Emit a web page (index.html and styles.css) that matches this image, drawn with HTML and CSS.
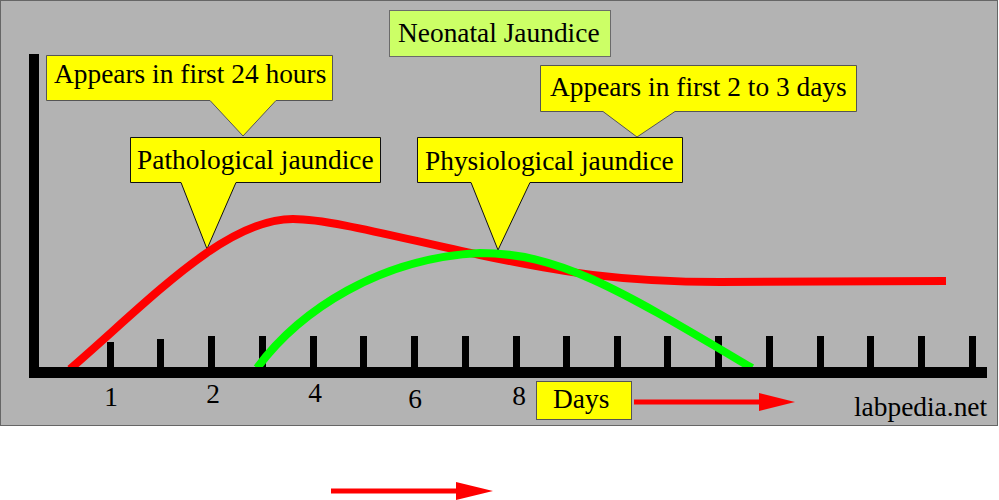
FILE: index.html
```html
<!DOCTYPE html>
<html lang="en">
<head>
<meta charset="utf-8">
<title>Neonatal Jaundice</title>
<link rel="stylesheet" href="styles.css">
</head>
<body>
<div class="page">
  <svg class="chart" width="999" height="500" viewBox="0 0 999 500" xmlns="http://www.w3.org/2000/svg">
    <rect class="panel" x="0.5" y="0.5" width="997" height="425"/>

    <!-- title -->
    <rect class="title-box" x="389.5" y="10.5" width="221" height="46"/>
    <text class="label" x="398" y="42">Neonatal Jaundice</text>

    <!-- callouts -->
    <polygon class="callout callout-soft" points="46.5,55.5 332.5,55.5 332.5,100.5 276,100.5 243,136 210,100.5 46.5,100.5"/>
    <text class="label" x="54" y="83">Appears in first 24 hours</text>

    <polygon class="callout callout-soft" points="540.5,65.5 856.5,65.5 856.5,111.5 675,111.5 637,137 603,111.5 540.5,111.5"/>
    <text class="label" x="550" y="96">Appears in first 2 to 3 days</text>

    <polygon class="callout" points="130.5,137.5 380.5,137.5 380.5,182.5 236,182.5 207,249 181,182.5 130.5,182.5"/>
    <text class="label" x="137" y="169">Pathological jaundice</text>

    <polygon class="callout" points="417.5,137.5 682.5,137.5 682.5,182.5 530,182.5 498,250 471,182.5 417.5,182.5"/>
    <text class="label" x="425" y="170">Physiological jaundice</text>

    <!-- ticks -->
    <g class="ticks">
      <rect x="107" y="342" width="7" height="30"/>
      <rect x="157" y="339" width="7" height="33"/>
      <rect x="208" y="336" width="7" height="36"/>
      <rect x="259" y="336" width="7" height="36"/>
      <rect x="310" y="336" width="7" height="36"/>
      <rect x="360" y="336" width="7" height="36"/>
      <rect x="411" y="336" width="7" height="36"/>
      <rect x="462" y="336" width="7" height="36"/>
      <rect x="513" y="336" width="7" height="36"/>
      <rect x="563" y="336" width="7" height="36"/>
      <rect x="614" y="336" width="7" height="36"/>
      <rect x="664" y="336" width="7" height="36"/>
      <rect x="715" y="336" width="7" height="36"/>
      <rect x="766" y="336" width="7" height="36"/>
      <rect x="817" y="336" width="7" height="36"/>
      <rect x="867" y="336" width="7" height="36"/>
      <rect x="918" y="336" width="7" height="36"/>
      <rect x="969" y="336" width="7" height="36"/>
    </g>

    <!-- curves -->
    <path class="curve curve-red" d="M 70 369 C 150 300 225 219 293 219 C 330 219 400 238 480 255 C 560 272 620 282 720 282 L 946 281"/>
    <path class="curve curve-green" d="M 257 368 C 300 310 380 258 480 253 C 560 253 620 290 752 368"/>

    <!-- axes -->
    <rect class="axis" x="29" y="54" width="10" height="324"/>
    <rect class="axis" x="29" y="367" width="958" height="11"/>

    <!-- axis numbers -->
    <text class="label num" x="111" y="406">1</text>
    <text class="label num" x="213" y="403">2</text>
    <text class="label num" x="315" y="402">4</text>
    <text class="label num" x="415" y="408">6</text>
    <text class="label num" x="519" y="405">8</text>

    <!-- days -->
    <rect class="callout callout-soft" x="536.5" y="381.5" width="95" height="38"/>
    <text class="label" x="553" y="408">Days</text>
    <line class="arrow-line" x1="634" y1="402" x2="762" y2="402"/>
    <polygon class="arrow-head" points="759,393 795,402 759,411"/>

    <text class="label" x="854" y="416">labpedia.net</text>

    <!-- arrow below panel -->
    <line class="arrow-line" x1="331" y1="491" x2="459" y2="491"/>
    <polygon class="arrow-head" points="456,482 493,491 456,500"/>
  </svg>
</div>
</body>
</html>
```

FILE: styles.css
```css
html, body {
  margin: 0;
  padding: 0;
  background: #ffffff;
}

.page {
  width: 999px;
  height: 500px;
  overflow: hidden;
}

.chart {
  display: block;
}

.panel {
  fill: #b3b3b3;
  stroke: #666666;
  stroke-width: 1;
}

.title-box {
  fill: #ccff66;
  stroke: #6b6b6b;
  stroke-width: 1;
}

.callout {
  fill: #ffff00;
  stroke: #111111;
  stroke-width: 1;
}

.callout-soft {
  stroke: #555555;
}

.label {
  font-family: "Liberation Serif", "Times New Roman", serif;
  font-size: 27.4px;
  fill: #000000;
}

.num {
  text-anchor: middle;
}

.ticks rect,
.axis {
  fill: #000000;
}

.curve {
  fill: none;
  stroke-width: 8;
  stroke-linecap: butt;
}

.curve-red {
  stroke: #ff0000;
}

.curve-green {
  stroke: #00ff00;
}

.arrow-line {
  stroke: #ff0000;
  stroke-width: 5;
}

.arrow-head {
  fill: #ff0000;
}
```
